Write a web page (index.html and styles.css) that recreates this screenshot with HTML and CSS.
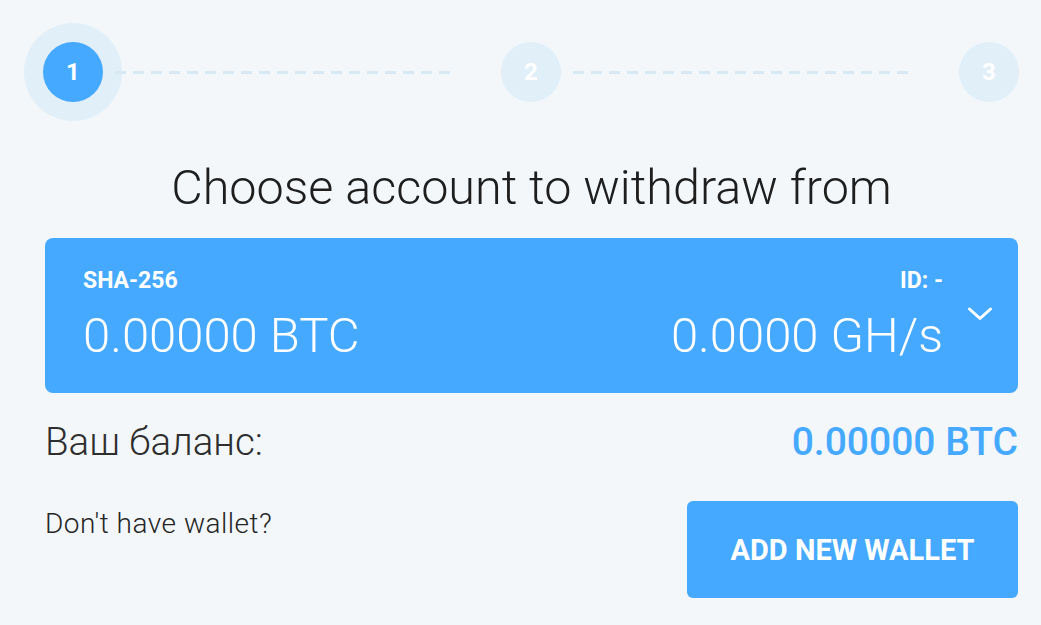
FILE: index.html
```html
<!DOCTYPE html>
<html>
<head>
<meta charset="utf-8">
<link rel="stylesheet" href="styles.css">
</head>
<body>
<div class="page">
  <div class="stepper">
    <div class="step step-active">1</div>
    <div class="step-line"></div>
    <div class="step">2</div>
    <div class="step-line"></div>
    <div class="step">3</div>
  </div>

  <h1 class="title">Choose account to withdraw from</h1>

  <div class="account-card">
    <div class="card-col">
      <div class="card-label">SHA-256</div>
      <div class="card-value">0.00000 BTC</div>
    </div>
    <div class="card-col card-col-right">
      <div class="card-label">ID: -</div>
      <div class="card-value">0.0000 GH/s</div>
    </div>
    <svg class="chevron" width="26" height="16" viewBox="0 0 26 16">
      <path d="M2.5 3 L13 12.5 L23.5 3" fill="none" stroke="#ffffff" stroke-width="3" stroke-linecap="round" stroke-linejoin="round"/>
    </svg>
  </div>

  <div class="balance-row">
    <span class="balance-label">Ваш баланс:</span>
    <span class="balance-value">0.00000 BTC</span>
  </div>

  <div class="wallet-row">
    <span class="wallet-text">Don't have wallet?</span>
    <button class="wallet-btn">ADD NEW WALLET</button>
  </div>
</div>
</body>
</html>
```

FILE: styles.css
```css
html, body {
  margin: 0;
  padding: 0;
  background: #f3f7fa;
}

body {
  font-family: Roboto, "Noto Sans", sans-serif;
  color: #2a2a2a;
  width: 1041px;
  height: 625px;
  overflow: hidden;
}

.page {
  padding: 42px 23px 0 45px;
}

.stepper {
  display: flex;
  align-items: center;
  margin-left: -2px;
  margin-right: -1px;
}

.step {
  flex: none;
  width: 60px;
  height: 60px;
  border-radius: 50%;
  background: #e1eff9;
  color: #ffffff;
  font-weight: 700;
  font-size: 24px;
  display: flex;
  align-items: center;
  justify-content: center;
}

.step-active {
  background: #45a9ff;
  box-shadow: 0 0 0 19px #e1eff9;
}

.step-line {
  flex: 1;
  height: 3px;
  margin: 0 51px 0 12px;
  background: repeating-linear-gradient(90deg, #d8e9f6 0 11px, transparent 11px 18px);
}

.title {
  margin: 58px 0 0;
  text-align: center;
  font-size: 48.5px;
  font-weight: 300;
  line-height: 56px;
  color: #1e1e1e;
}

.account-card {
  margin-top: 22px;
  height: 155px;
  box-sizing: border-box;
  background: #45a9ff;
  border-radius: 8px;
  display: flex;
  align-items: flex-start;
  padding: 29px 25px 0 38px;
  color: #ffffff;
}

.card-col {
  flex: 1;
  display: flex;
  flex-direction: column;
}

.card-col-right {
  align-items: flex-end;
}

.card-label {
  font-size: 23px;
  font-weight: 700;
  line-height: 27px;
}

.card-value {
  font-size: 49px;
  font-weight: 300;
  line-height: 57px;
  margin-top: 13px;
}

.chevron {
  flex: none;
  margin: 39px 0 0 24px;
}

.balance-row {
  display: flex;
  justify-content: space-between;
  align-items: baseline;
  margin-top: 26px;
  line-height: 45px;
}

.balance-label {
  font-size: 38.5px;
  font-weight: 300;
  color: #2e2e2e;
}

.balance-value {
  font-size: 39px;
  font-weight: 500;
  color: #45a9ff;
}

.wallet-row {
  display: flex;
  justify-content: space-between;
  align-items: flex-start;
  margin-top: 36px;
}

.wallet-text {
  font-size: 28px;
  font-weight: 300;
  letter-spacing: 0.5px;
  line-height: 32px;
  color: #262626;
  margin-top: 7px;
}

.wallet-btn {
  width: 331px;
  height: 97px;
  border: none;
  border-radius: 6px;
  background: #45a9ff;
  color: #ffffff;
  font-family: Roboto, "Noto Sans", sans-serif;
  font-size: 29px;
  font-weight: 700;
  padding: 0;
}
```
